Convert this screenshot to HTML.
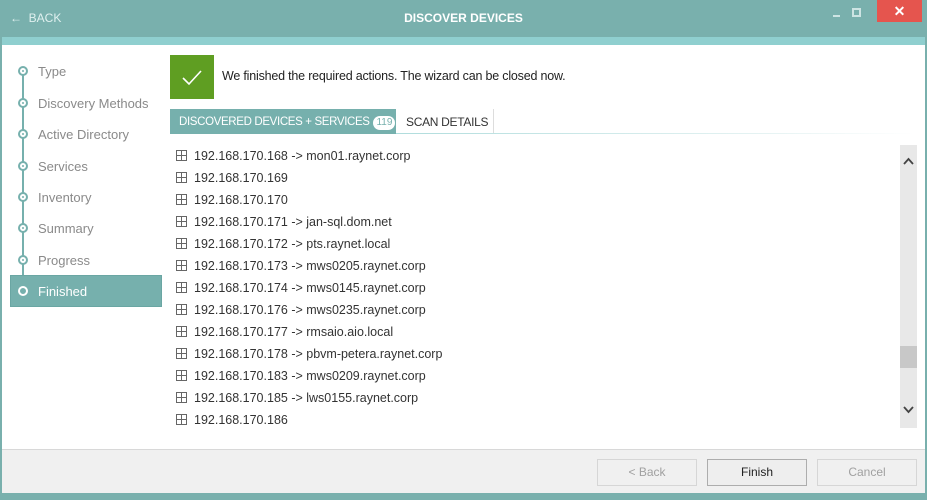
<!DOCTYPE html>
<html><head><style>
*{margin:0;padding:0;box-sizing:border-box}
body{width:927px;height:500px;overflow:hidden;background:#79b0ad;font-family:"Liberation Sans",sans-serif;position:relative}
.abs{position:absolute}
.title{left:0;top:0;width:927px;height:37px;background:#79b0ad;color:#fff}
.strip{left:2px;top:37px;width:923px;height:8px;background:#8fcfcf}
.main{left:2px;top:45px;width:923px;height:404px;background:#fff}
.foot{left:2px;top:449px;width:923px;height:44px;background:#f0f0f0;border-top:1px solid #d8d8d8}
.side{font-size:13px;color:#8a8a8a}
.side div{position:absolute;left:38px}
.dot{position:absolute;left:18px;width:10px;height:10px;border:2px solid #76b0ad;border-radius:50%;background:#fff}
.dot::after{content:"";position:absolute;left:2px;top:2px;width:2px;height:2px;background:#76b0ad;border-radius:50%}
.row{position:absolute;left:176px;font-size:12.5px;color:#333;white-space:nowrap}
.grid{display:inline-block;width:11px;height:11px;border:1px solid #666;position:relative;vertical-align:-1px;margin-right:7px}
.grid::before{content:"";position:absolute;left:4px;top:0;width:1px;height:9px;background:#666}
.grid::after{content:"";position:absolute;top:4px;left:0;height:1px;width:9px;background:#666}
.btn{position:absolute;top:459px;width:100px;height:27px;border:1px solid #d6d6d6;background:#f0f0f0;font-size:12px;color:#a0a0a0;text-align:center;line-height:25px}
.tab{white-space:nowrap;font-size:12px;letter-spacing:-0.3px}
</style></head><body>
<div class="abs title">
 <div class="abs" style="left:10px;top:11px;font-size:12px;color:#dff0ef">&#8592;&nbsp; BACK</div>
 <div class="abs" style="left:0;width:927px;top:11px;text-align:center;font-size:12px;font-weight:bold">DISCOVER DEVICES</div>
 <div class="abs" style="left:833px;top:15px;width:7px;height:2px;background:#cde4e3"></div>
 <div class="abs" style="left:852px;top:8px;width:9px;height:9px;border:2px solid #cde4e3"></div>
 <div class="abs" style="left:877px;top:0;width:45px;height:22px;background:#e5554e;color:#fff;text-align:center;font-size:14px;font-weight:bold;line-height:22px">✕</div>
</div>
<div class="abs strip"></div>
<div class="abs main"></div>
<div class="abs" style="left:22px;top:71px;width:2px;height:220px;background:#76b0ad"></div>
<div class="abs" style="left:10px;top:275px;width:152px;height:32px;background:#76b0ad;border:1px solid #6aa6a3"></div>
<div class="side">
 <span class="dot" style="top:66px"></span><div style="top:64px">Type</div>
 <span class="dot" style="top:98px"></span><div style="top:96px">Discovery Methods</div>
 <span class="dot" style="top:129px"></span><div style="top:127px">Active Directory</div>
 <span class="dot" style="top:161px"></span><div style="top:159px">Services</div>
 <span class="dot" style="top:192px"></span><div style="top:190px">Inventory</div>
 <span class="dot" style="top:223px"></span><div style="top:221px">Summary</div>
 <span class="dot" style="top:255px"></span><div style="top:253px">Progress</div>
 <span class="dot" style="top:286px;background:#76b0ad;border-color:#fff"></span><div style="top:284px;color:#fff">Finished</div>
</div>
<div class="abs" style="left:170px;top:55px;width:44px;height:44px;background:#5f9e22">
 <svg width="44" height="44"><path d="M13 23 L19 29 L31 16" stroke="#fff" stroke-width="1.6" fill="none"/></svg>
</div>
<div class="abs" style="left:222px;top:69px;font-size:12.5px;color:#222;letter-spacing:-0.2px">We finished the required actions. The wizard can be closed now.</div>
<div class="abs" style="left:170px;top:133px;width:745px;height:1px;background:linear-gradient(90deg,#8fcfcf,#e6f3f3 80%,#fff)"></div>
<div class="abs tab" style="left:170px;top:109px;width:226px;height:25px;background:#76b0ad;color:#fff;padding:6px 0 0 9px;font-size:11.5px;letter-spacing:-0.35px;line-height:14px">DISCOVERED DEVICES + SERVICES <span style="display:inline-block;background:#fff;color:#76b0ad;border-radius:8px;font-size:10px;line-height:12px;padding:1px 3px;margin-left:1px;letter-spacing:0">119</span></div>
<div class="abs tab" style="left:396px;top:109px;width:98px;height:24px;border-right:1px solid #ddd;color:#333;padding:6px 0 0 10px;line-height:14px">SCAN DETAILS</div>
<div class="row" style="top:149px"><span class="grid"></span>192.168.170.168 -&gt; mon01.raynet.corp</div>
<div class="row" style="top:171px"><span class="grid"></span>192.168.170.169</div>
<div class="row" style="top:193px"><span class="grid"></span>192.168.170.170</div>
<div class="row" style="top:215px"><span class="grid"></span>192.168.170.171 -&gt; jan-sql.dom.net</div>
<div class="row" style="top:237px"><span class="grid"></span>192.168.170.172 -&gt; pts.raynet.local</div>
<div class="row" style="top:259px"><span class="grid"></span>192.168.170.173 -&gt; mws0205.raynet.corp</div>
<div class="row" style="top:281px"><span class="grid"></span>192.168.170.174 -&gt; mws0145.raynet.corp</div>
<div class="row" style="top:303px"><span class="grid"></span>192.168.170.176 -&gt; mws0235.raynet.corp</div>
<div class="row" style="top:325px"><span class="grid"></span>192.168.170.177 -&gt; rmsaio.aio.local</div>
<div class="row" style="top:347px"><span class="grid"></span>192.168.170.178 -&gt; pbvm-petera.raynet.corp</div>
<div class="row" style="top:369px"><span class="grid"></span>192.168.170.183 -&gt; mws0209.raynet.corp</div>
<div class="row" style="top:391px"><span class="grid"></span>192.168.170.185 -&gt; lws0155.raynet.corp</div>
<div class="row" style="top:413px"><span class="grid"></span>192.168.170.186</div>
<div class="abs" style="left:900px;top:145px;width:17px;height:283px;background:#e8e8e8"></div>
<div class="abs" style="left:900px;top:346px;width:17px;height:22px;background:#c8c8c8"></div>
<svg class="abs" style="left:900px;top:152px" width="17" height="20"><path d="M4 12 L8.5 7 L13 12" stroke="#444" stroke-width="1.8" fill="none"/></svg>
<svg class="abs" style="left:900px;top:400px" width="17" height="20"><path d="M4 7 L8.5 12 L13 7" stroke="#444" stroke-width="1.8" fill="none"/></svg>
<div class="abs foot"></div>
<div class="btn" style="left:597px">&lt; Back</div>
<div class="btn" style="left:707px;border-color:#adadad;color:#222;background:#eeeeee">Finish</div>
<div class="btn" style="left:817px">Cancel</div>
</body></html>
